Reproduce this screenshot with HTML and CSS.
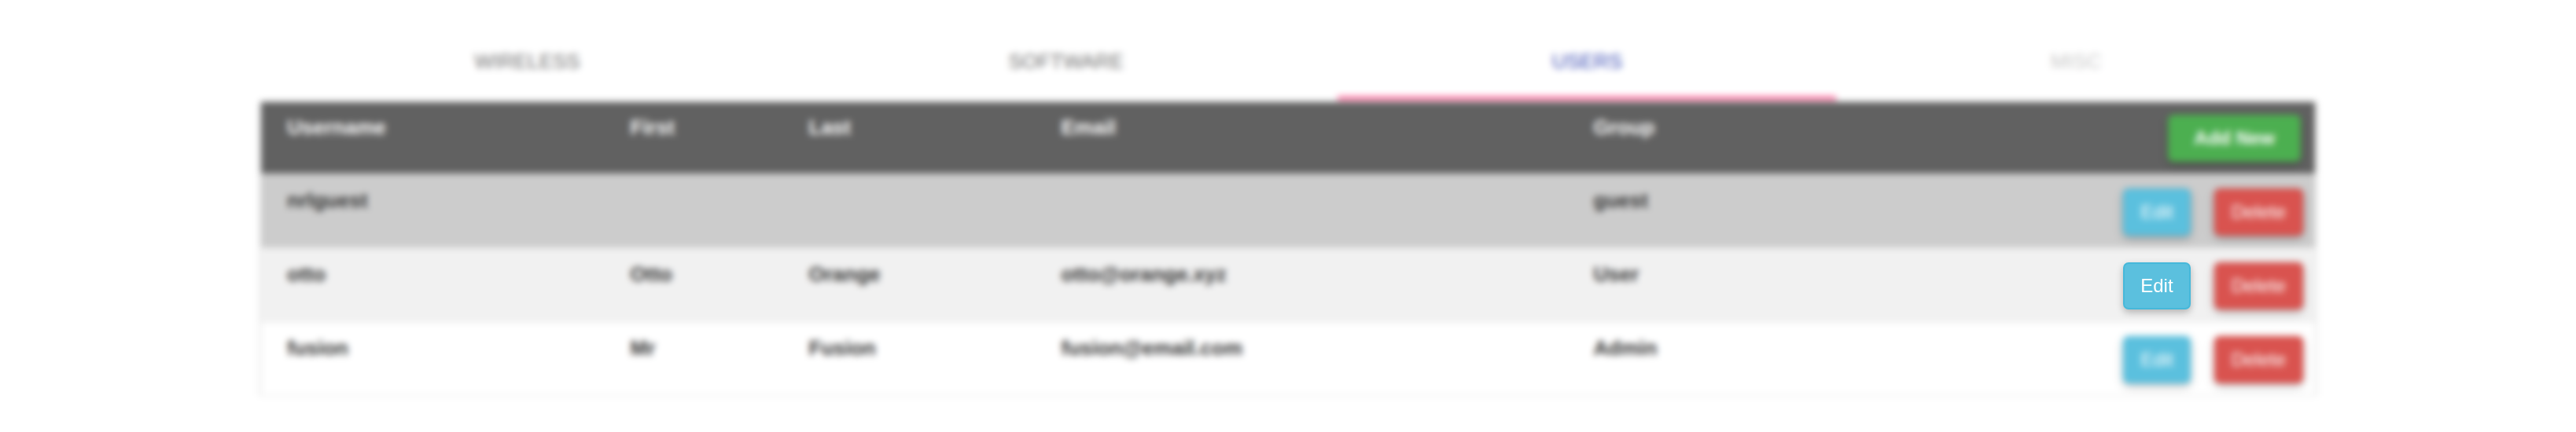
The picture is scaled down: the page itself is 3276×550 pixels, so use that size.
FILE: index.html
```html
<!DOCTYPE html>
<html lang="en">
<head>
<meta charset="utf-8">
<title>Users</title>
<link rel="stylesheet" href="styles.css">
</head>
<body>
<div class="page">
  <nav class="tabs">
    <div class="tab">WIRELESS</div>
    <div class="tab">SOFTWARE</div>
    <div class="tab active">USERS</div>
    <div class="tab disabled">MISC</div>
  </nav>
  <table class="users">
    <colgroup>
      <col class="c-user">
      <col class="c-first">
      <col class="c-last">
      <col class="c-email">
      <col class="c-group">
      <col class="c-actions">
    </colgroup>
    <thead>
      <tr>
        <th>Username</th>
        <th>First</th>
        <th>Last</th>
        <th>Email</th>
        <th>Group</th>
        <th class="actions-cell"><div class="actions"><button class="btn btn-add">Add New</button></div></th>
      </tr>
    </thead>
    <tbody>
      <tr class="row-selected">
        <td>nrlguest</td>
        <td></td>
        <td></td>
        <td></td>
        <td>guest</td>
        <td class="actions-cell"><div class="actions"><button class="btn btn-edit">Edit</button><button class="btn btn-delete">Delete</button></div></td>
      </tr>
      <tr class="row-alt">
        <td>otto</td>
        <td>Otto</td>
        <td>Orange</td>
        <td>otto@orange.xyz</td>
        <td>User</td>
        <td class="actions-cell"><div class="actions"><button class="btn btn-edit is-focused">Edit</button><button class="btn btn-delete">Delete</button></div></td>
      </tr>
      <tr>
        <td>fusion</td>
        <td>Mr</td>
        <td>Fusion</td>
        <td>fusion@email.com</td>
        <td>Admin</td>
        <td class="actions-cell"><div class="actions"><button class="btn btn-edit">Edit</button><button class="btn btn-delete">Delete</button></div></td>
      </tr>
    </tbody>
  </table>
</div>
<div class="blur-layer"></div>
</body>
</html>
```
FILE: styles.css
```css
html, body {
  margin: 0;
  padding: 0;
  background: #ffffff;
  overflow: hidden;
}
body {
  font-family: "Liberation Sans", Arial, sans-serif;
  color: #333333;
}
.page {
  width: 2614px;
  margin: 0 auto;
  padding-top: 36px;
}
.tabs {
  display: flex;
  height: 91px;
}
.tab {
  flex: 1 1 auto;
  display: flex;
  align-items: center;
  justify-content: center;
  box-sizing: border-box;
  padding-bottom: 3px;
  border-bottom: 4px solid transparent;
  font-size: 26px;
  color: #707070;
  white-space: nowrap;
}
.tab.active {
  color: #3f51b5;
  border-bottom-color: #ff4081;
}
.tab.disabled {
  color: #c8c8c8;
}
.users {
  width: 100%;
  margin-top: 2px;
  table-layout: fixed;
  border-collapse: collapse;
  border: 1px solid #dddddd;
  box-shadow: 0 1px 4px rgba(0, 0, 0, 0.15);
  font-size: 26px;
  font-weight: bold;
  line-height: 30px;
}
.c-user { width: 437px; }
.c-first { width: 227px; }
.c-last { width: 321px; }
.c-email { width: 677px; }
.c-group { width: 400px; }
.users th,
.users td {
  padding: 18px 0 0 33px;
  text-align: left;
  vertical-align: top;
  white-space: nowrap;
}
.users thead tr {
  height: 92px;
  background: #616161;
  color: #ffffff;
}
.users thead th {
  padding-top: 17px;
}
.users tbody tr {
  height: 94px;
  background: #ffffff;
  border-top: 1px solid #e4e4e4;
}
.users tbody tr.row-selected {
  background: #cccccc;
}
.users tbody tr.row-alt {
  background: #f1f1f1;
}
.users .actions-cell {
  padding: 18px 15px 0 0;
}
.users thead .actions-cell {
  padding: 16px 18px 0 0;
}
.actions {
  display: flex;
  justify-content: flex-end;
  gap: 30px;
}
.btn {
  box-sizing: border-box;
  height: 60px;
  padding: 0 20px;
  border: 2px solid transparent;
  border-radius: 7px;
  font-family: "Liberation Sans", Arial, sans-serif;
  font-size: 24px;
  font-weight: normal;
  line-height: 56px;
  color: #ffffff;
  box-shadow: 0 4px 10px rgba(0, 0, 0, 0.25);
  cursor: pointer;
}
.btn-add {
  padding: 0 31px;
  font-weight: bold;
  background: #4caf50;
  border-color: #4caa4c;
}
.btn-edit {
  background: #5bc0de;
  border-color: #46b8da;
}
.btn-delete {
  background: #d9534f;
  border-color: #d43f3a;
}
.btn.is-focused {
  position: relative;
  z-index: 2;
}
.blur-layer {
  position: fixed;
  top: 0;
  left: 0;
  right: 0;
  bottom: 0;
  z-index: 1;
  pointer-events: none;
  -webkit-backdrop-filter: blur(4px);
  backdrop-filter: blur(4px);
}
```
